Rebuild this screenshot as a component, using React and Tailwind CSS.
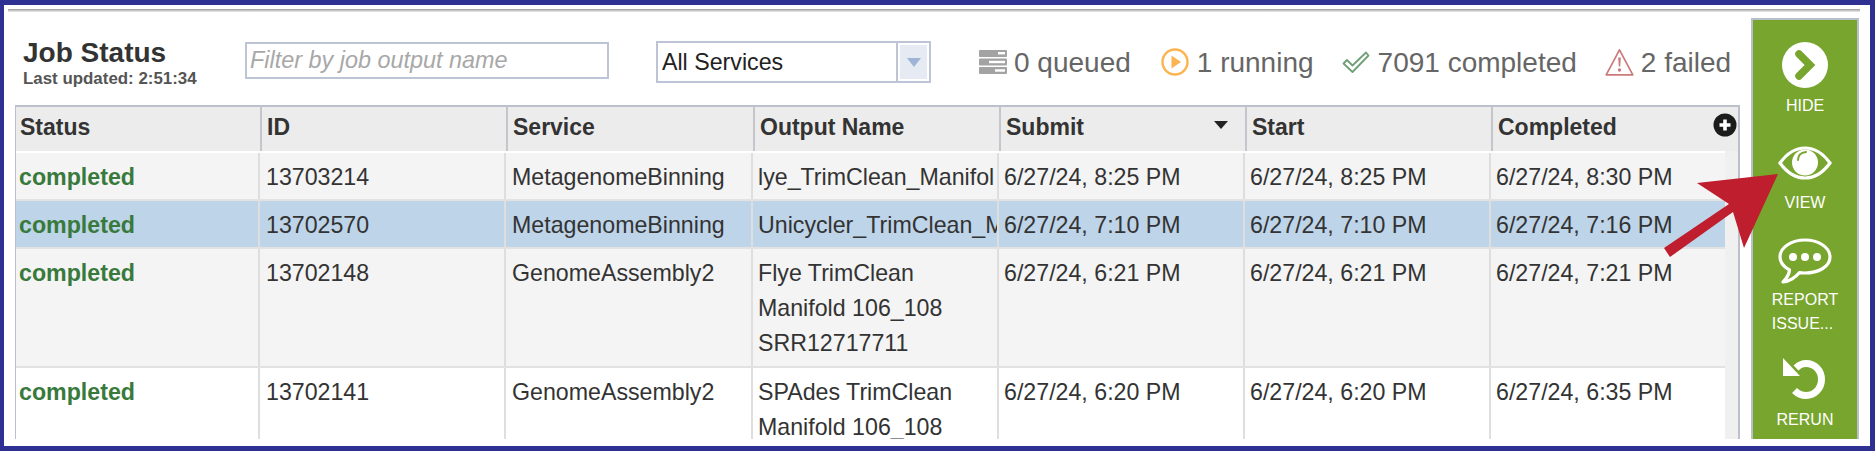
const rows = [
  { id: '13703214', service: 'MetagenomeBinning', output: 'lye_TrimClean_Manifol', submit: '6/27/24, 8:25 PM', start: '6/27/24, 8:25 PM', completed: '6/27/24, 8:30 PM', bg: 'bg-[#f4f4f4]', h: 'h-[48px]', nowrap: true },
  { id: '13702570', service: 'MetagenomeBinning', output: 'Unicycler_TrimClean_M', submit: '6/27/24, 7:10 PM', start: '6/27/24, 7:10 PM', completed: '6/27/24, 7:16 PM', bg: 'bg-[#bed4e9]', h: 'h-[48px]', nowrap: true },
  { id: '13702148', service: 'GenomeAssembly2', output: 'Flye TrimClean Manifold 106_108 SRR12717711', submit: '6/27/24, 6:21 PM', start: '6/27/24, 6:21 PM', completed: '6/27/24, 7:21 PM', bg: 'bg-[#f4f4f4]', h: 'h-[119px]' },
  { id: '13702141', service: 'GenomeAssembly2', output: 'SPAdes TrimClean Manifold 106_108', submit: '6/27/24, 6:20 PM', start: '6/27/24, 6:20 PM', completed: '6/27/24, 6:35 PM', bg: 'bg-white', h: 'h-[119px]' },
];

const headers = ['Status', 'ID', 'Service', 'Output Name', 'Submit', 'Start', 'Completed'];

const QueuedIcon = () => (
  <svg width="28" height="24" viewBox="0 0 28 24" className="shrink-0">
    <rect y="0" width="28" height="7" rx="1" fill="#a3a3a3" />
    <rect y="8.5" width="28" height="7" rx="1" fill="#a3a3a3" />
    <rect y="17" width="28" height="7" rx="1" fill="#a3a3a3" />
    <rect x="19" y="2" width="7" height="2.4" fill="#fff" />
    <rect x="10" y="10.8" width="16" height="2.4" fill="#fff" />
    <rect x="16" y="19.3" width="10" height="2.4" fill="#fff" />
  </svg>
);

const RunningIcon = () => (
  <svg width="28" height="28" viewBox="0 0 28 28" className="shrink-0">
    <circle cx="14" cy="14" r="12.5" fill="none" stroke="#fbb450" strokeWidth="2.4" />
    <path d="M10.5 7.5 L20 14 L10.5 20.5 Z" fill="#fbb450" />
  </svg>
);

const CheckIcon = () => (
  <svg width="28" height="23" viewBox="0 0 28 23" className="shrink-0">
    <path d="M1.5 12.5 L5 9 L10.5 14.5 L24 1.5 L26.5 4.5 L10.5 21 Z" fill="none" stroke="#6fa076" strokeWidth="1.8" strokeLinejoin="round" />
  </svg>
);

const WarnIcon = () => (
  <svg width="29" height="28" viewBox="0 0 29 28" className="shrink-0">
    <path d="M14.5 1.8 L27.8 26.8 H1.2 Z" fill="none" stroke="#cb7a7a" strokeWidth="1.7" strokeLinejoin="round" />
    <path d="M13.2 9.5 H15.8 L15.2 18.5 H13.8 Z" fill="#cb7a7a" />
    <circle cx="14.5" cy="22" r="1.7" fill="#cb7a7a" />
  </svg>
);

const Stat = ({ icon, text, className }) => (
  <div className={`flex items-center ${className}`}>
    {icon}
    <span className="text-[28px] leading-[35px] text-[#666] whitespace-nowrap">{text}</span>
  </div>
);

const HideIcon = () => (
  <svg width="46" height="46" viewBox="0 0 46 46">
    <circle cx="23" cy="23" r="23" fill="#fff" />
    <path d="M17 12 L28 23 L17 34" fill="none" stroke="#78a52e" strokeWidth="7.5" strokeLinecap="round" strokeLinejoin="miter" />
  </svg>
);

const EyeIcon = () => (
  <svg width="54" height="34" viewBox="0 0 54 34">
    <path d="M2 17 C10 6 18 2 27 2 C36 2 44 6 52 17 C44 28 36 32 27 32 C18 32 10 28 2 17 Z" fill="none" stroke="#fff" strokeWidth="3.2" />
    <circle cx="27" cy="16.5" r="13" fill="#fff" />
    <path d="M20 14 C20 9.5 23 6.5 28 6" fill="none" stroke="#78a52e" strokeWidth="2" strokeLinecap="round" />
  </svg>
);

const ChatIcon = () => (
  <svg width="54" height="46" viewBox="0 0 54 46">
    <path d="M27 2 C40 2 52 9 52 19 C52 29 40 35 27 35 C25 35 23 35 21.5 34.6 C18 39 11 43.5 5 44 C8 41 11 37 11.5 32 C6 29 2 25 2 19 C2 9 14 2 27 2 Z" fill="none" stroke="#fff" strokeWidth="3.2" strokeLinejoin="round" />
    <circle cx="15" cy="19" r="4" fill="#fff" />
    <circle cx="27" cy="19" r="4" fill="#fff" />
    <circle cx="39" cy="19" r="4" fill="#fff" />
  </svg>
);

const RerunIcon = () => (
  <svg width="46" height="46" viewBox="0 0 46 46">
    <path d="M14 12 C17 9 20 7.5 24 7.5 C33 7.5 39.5 14.5 39.5 23.5 C39.5 32.5 32.5 39.5 24 39.5 C19.5 39.5 15.5 37.5 12.5 34.5" fill="none" stroke="#fff" strokeWidth="7" />
    <path d="M1 2 V20 H18 Z" fill="#fff" />
  </svg>
);

const SideButton = ({ icon, lines, className }) => (
  <div className={`flex flex-col items-center text-white text-[16px] ${className}`}>
    {icon}
    {lines}
  </div>
);

export default function App() {
  return (
    <div className="relative w-[1875px] h-[451px] overflow-hidden bg-white border-[#2e3192] border-t-[5px] border-l-[4px] border-r-[5px] border-b-[5px] font-['Liberation_Sans',Arial,sans-serif]">
      {/* top shadow line */}
      <div className="ml-[4px] mt-[4px] w-[1852px] h-[3px] bg-gradient-to-b from-[#9a9a9a] to-[#efefef]" />

      <div className="flex mt-[6px]">
        {/* left column */}
        <div className="w-[1736px] pl-[11px]">
          <div className="flex items-start h-[87px]">
            <div className="w-[230px] pl-[8px] mt-[19px]">
              <div className="text-[28px] leading-[32px] font-bold text-[#333]">Job Status</div>
              <div className="text-[16.9px] leading-[20px] font-bold text-[#555]">Last updated: 2:51:34</div>
            </div>
            <div className="w-[364px] h-[37px] mt-[24px] border-2 border-[#bcc4d6] flex items-center pl-[3px]">
              <span className="text-[23.4px] italic text-[#a8a8a8] whitespace-nowrap">Filter by job output name</span>
            </div>
            <div className="w-[275px] h-[42px] ml-[47px] mt-[23px] border-2 border-[#bcc4d6] flex">
              <div className="flex-1 flex items-center pl-[4px] text-[23.2px] text-[#222]">All Services</div>
              <div className="w-[33px] border-l-2 border-[#bcc4d6] p-[2px]">
                <div className="h-full bg-[#e6ebf3] flex items-center justify-center">
                  <div className="w-0 h-0 border-l-[7px] border-r-[7px] border-t-[9px] border-l-transparent border-r-transparent border-t-[#9db4d6]" />
                </div>
              </div>
            </div>
            <div className="flex items-center h-[40px] mt-[24px]">
              <Stat icon={<QueuedIcon />} text="0 queued" className="ml-[48px] gap-[7px]" />
              <Stat icon={<RunningIcon />} text="1 running" className="ml-[30px] gap-[8px]" />
              <Stat icon={<CheckIcon />} text="7091 completed" className="ml-[28px] gap-[8px]" />
              <Stat icon={<WarnIcon />} text="2 failed" className="ml-[28px] gap-[7px]" />
            </div>
          </div>

          {/* table */}
          <div className="relative w-[1725px] h-[334px] overflow-hidden border-l border-r-2 border-t-2 border-[#bcc0cc] bg-[#f0f0f0]">
            <div className="grid grid-cols-[246px_246px_247px_246px_246px_246px_245px] h-[44px] bg-[#ececec]">
              {headers.map((h) => (
                <div key={h} className="relative flex items-center pl-[5px] pb-[3px] text-[23px] font-bold text-[#333] border-r-2 border-[#c4c6cc] last:border-r-0 first:pl-[4px]">
                  {h}
                  {h === 'Submit' && (
                    <div className="absolute right-[17px] top-[14px] w-0 h-0 border-l-[7px] border-r-[7px] border-t-[8px] border-l-transparent border-r-transparent border-t-[#222]" />
                  )}
                  {h === 'Completed' && (
                    <svg width="24" height="24" viewBox="0 0 24 24" className="absolute right-[1px] top-[6px]">
                      <circle cx="12" cy="12" r="11.5" fill="#1c1c1c" />
                      <path d="M12 6.5 V17.5 M6.5 12 H17.5" stroke="#fff" strokeWidth="3.6" />
                    </svg>
                  )}
                </div>
              ))}
            </div>
            <div className="w-[1709px] h-[2px] bg-white" />
            {rows.map((r) => (
              <div key={r.id} className={`grid grid-cols-[244px_246px_247px_246px_246px_246px_234px] w-[1709px] ${r.h} ${r.bg} border-b-2 border-[#e2e2e2] text-[23.2px] leading-[35px] text-[#333]`}>
                <div className="pl-[3px] pt-[7px] font-bold text-[#38793c] border-r-2 border-[#dedede]">completed</div>
                <div className="pl-[6px] pt-[7px] border-r-2 border-[#dedede]">{r.id}</div>
                <div className="pl-[6px] pt-[7px] border-r-2 border-[#dedede]">{r.service}</div>
                <div className={`pl-[5px] pt-[7px] border-r-2 border-[#dedede] overflow-hidden ${r.nowrap ? 'whitespace-nowrap' : 'pr-[30px]'}`}>{r.output}</div>
                <div className="pl-[5px] pt-[7px] border-r-2 border-[#dedede]">{r.submit}</div>
                <div className="pl-[5px] pt-[7px] border-r-2 border-[#dedede]">{r.start}</div>
                <div className="pl-[5px] pt-[7px]">{r.completed}</div>
              </div>
            ))}
          </div>
        </div>

        {/* action panel */}
        <div className="ml-[11px] w-[108px] h-[421px] bg-[#78a52e] border-2 border-[#b8c0cc] border-b-0 flex flex-col items-center">
          <SideButton className="mt-[22px]" icon={<HideIcon />} lines={<div className="leading-[20px] mt-[8px]">HIDE</div>} />
          <SideButton className="mt-[30px]" icon={<EyeIcon />} lines={<div className="leading-[20px] mt-[13px]">VIEW</div>} />
          <SideButton className="mt-[25px]" icon={<ChatIcon />} lines={<div className="leading-[24px] mt-[4px]">REPORT<br />ISSUE...</div>} />
          <SideButton className="mt-[20px]" icon={<RerunIcon />} lines={<div className="leading-[20px] mt-[8px]">RERUN</div>} />
        </div>
      </div>

      {/* red callout arrow */}
      <svg width="1875" height="451" viewBox="0 0 1875 451" className="absolute left-[-4px] top-[-5px] pointer-events-none">
        <path d="M1778 174 L1697 183 L1729 204 L1664 248 L1670 257 L1733 212 L1744 248 Z" fill="#be1e2d" />
      </svg>
    </div>
  );
}
